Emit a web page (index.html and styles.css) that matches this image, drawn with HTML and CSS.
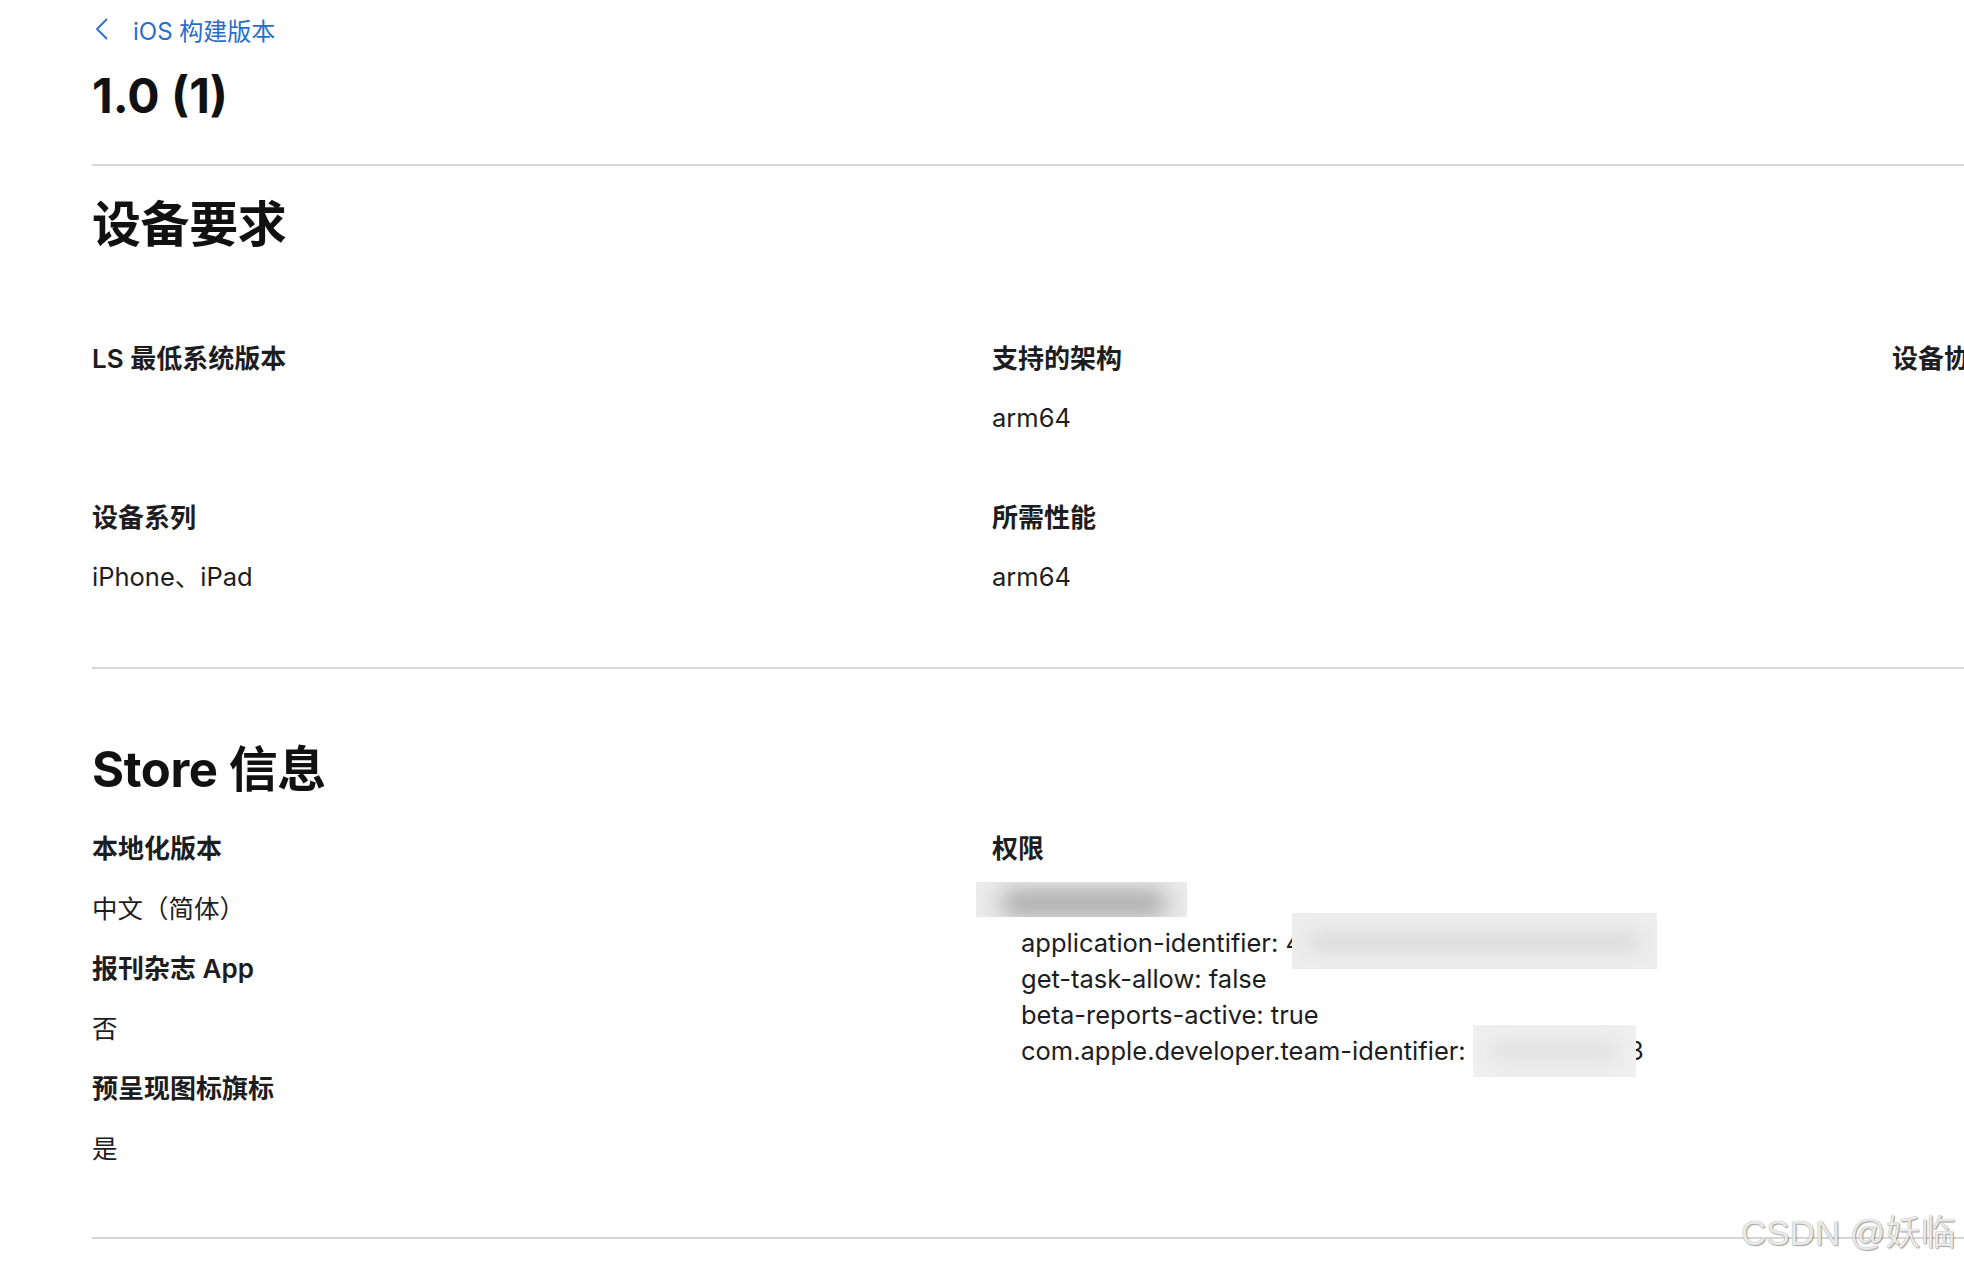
FILE: index.html
```html
<!DOCTYPE html>
<html lang="zh-CN">
<head>
<meta charset="utf-8">
<title>1.0 (1)</title>
<link rel="stylesheet" href="styles.css">
</head>
<body>
<div class="page">
  <header class="top">
    <a class="back" href="#">
      <svg class="chev" viewBox="0 0 13 22" aria-hidden="true"><path d="M11.5 1.5 L2 11 L11.5 20.5"/></svg>
      <span>iOS 构建版本</span>
    </a>
    <h1 class="title">1.0 (1)</h1>
  </header>

  <section class="section device">
    <h2 class="sec-title">设备要求</h2>
    <div class="grid">
      <div class="item"><div class="label">LS 最低系统版本</div><div class="value"></div></div>
      <div class="item"><div class="label">支持的架构</div><div class="value">arm64</div></div>
      <div class="item"><div class="label">设备协议</div><div class="value"></div></div>
      <div class="item"><div class="label">设备系列</div><div class="value">iPhone、iPad</div></div>
      <div class="item"><div class="label">所需性能</div><div class="value">arm64</div></div>
    </div>
  </section>

  <section class="section store">
    <h2 class="sec-title">Store 信息</h2>
    <div class="grid store-grid">
      <div class="stack">
        <div class="label">本地化版本</div>
        <div class="value">中文（简体）</div>
        <div class="label">报刊杂志 App</div>
        <div class="value">否</div>
        <div class="label">预呈现图标旗标</div>
        <div class="value">是</div>
      </div>
      <div class="stack">
        <div class="label">权限</div>
        <div class="ents">
          <div class="ent-first"><span class="blur blur-a"></span></div>
          <div class="ent-line">application-identifier: 4<span class="blur blur-b"></span></div>
          <div class="ent-line">get-task-allow: false</div>
          <div class="ent-line">beta-reports-active: true</div>
          <div class="ent-line">com.apple.developer.team-identifier: <span class="blur blur-c"></span>3</div>
        </div>
      </div>
    </div>
  </section>
  <div class="rule"></div>
</div>
<div class="watermark">CSDN @妖临</div>
</body>
</html>
```

FILE: styles.css
```css
html, body {
  margin: 0;
  padding: 0;
  overflow: hidden;
  background: #ffffff;
}

body {
  position: relative;
  width: 1964px;
  height: 1270px;
  font-family: Inter, "Noto Sans CJK SC", sans-serif;
  color: #1d1d1f;
}

.page {
  width: 2800px;
  padding-left: 92px;
}

.top {
  padding-top: 11px;
}

.back {
  display: flex;
  align-items: center;
  height: 36px;
  font-size: 24px;
  color: #2a6dc8;
  text-decoration: none;
}

.chev {
  width: 13px;
  height: 22px;
  margin-left: 3px;
  margin-right: 25px;
  fill: none;
  stroke: #2a6dc8;
  stroke-width: 1.8;
  stroke-linecap: round;
  stroke-linejoin: round;
}

.title {
  margin: 20px 0 0;
  font-size: 48px;
  font-weight: 700;
  line-height: 58px;
  letter-spacing: 0;
  color: #111111;
}

.section {
  border-top: 2px solid #d6d6d6;
  padding-top: 29px;
  padding-bottom: 72px;
}

.device {
  margin-top: 39px;
}

.store {
  padding-top: 71px;
  padding-bottom: 70px;
}

.sec-title {
  margin: 0;
  font-size: 49px;
  font-weight: 700;
  line-height: 60px;
  letter-spacing: -0.4px;
  color: #111111;
}

.grid {
  display: grid;
  grid-template-columns: repeat(3, 900px);
  row-gap: 64px;
  margin-top: 86px;
}

.store-grid {
  margin-top: 31px;
}

.item {
  display: flex;
  flex-direction: column;
  gap: 23px;
}

.stack {
  display: flex;
  flex-direction: column;
  gap: 24px;
}

.label,
.value {
  line-height: 36px;
  min-height: 36px;
  white-space: nowrap;
}

.label {
  font-size: 26px;
  font-weight: 600;
}

.value {
  font-size: 25.5px;
  font-weight: 400;
}

.ents {
  margin-top: -2px;
  font-size: 25.5px;
  line-height: 36px;
}

.ent-first {
  position: relative;
  height: 36px;
}

.ent-line {
  padding-left: 29px;
  white-space: nowrap;
}

.blur {
  display: inline-block;
  position: relative;
  overflow: hidden;
}

.blur::before {
  content: "";
  position: absolute;
}

.blur-a {
  position: absolute;
  left: -16px;
  top: -7px;
  width: 211px;
  height: 35px;
  background: #ebebeb;
}

.blur-a::before {
  left: 25px;
  right: 20px;
  top: 10px;
  height: 22px;
  background: #9a9a9a;
  border-radius: 12px;
  filter: blur(12px);
}

.blur-b {
  vertical-align: top;
  width: 365px;
  height: 56px;
  margin: -12px 0 -8px -10px;
  background: #ededed;
}

.blur-b::before {
  left: 20px;
  right: 20px;
  top: 20px;
  height: 18px;
  background: #d9d9d9;
  filter: blur(9px);
}

.blur-c {
  vertical-align: top;
  width: 163px;
  height: 52px;
  margin: -8px -8px -8px 0;
  background: #efefef;
}

.blur-c::before {
  left: 20px;
  right: 20px;
  top: 18px;
  height: 16px;
  background: #dedede;
  filter: blur(9px);
}

.rule {
  border-top: 2px solid #d6d6d6;
}

.watermark {
  position: absolute;
  left: 1741px;
  top: 1211px;
  font-family: "Liberation Sans", "Noto Sans CJK SC", sans-serif;
  font-size: 35px;
  line-height: 44px;
  white-space: nowrap;
  color: #e9e9e9;
  text-shadow: 1px 1px 1px rgba(0, 0, 0, 0.35), 0 0 1px rgba(0, 0, 0, 0.35);
}
```
